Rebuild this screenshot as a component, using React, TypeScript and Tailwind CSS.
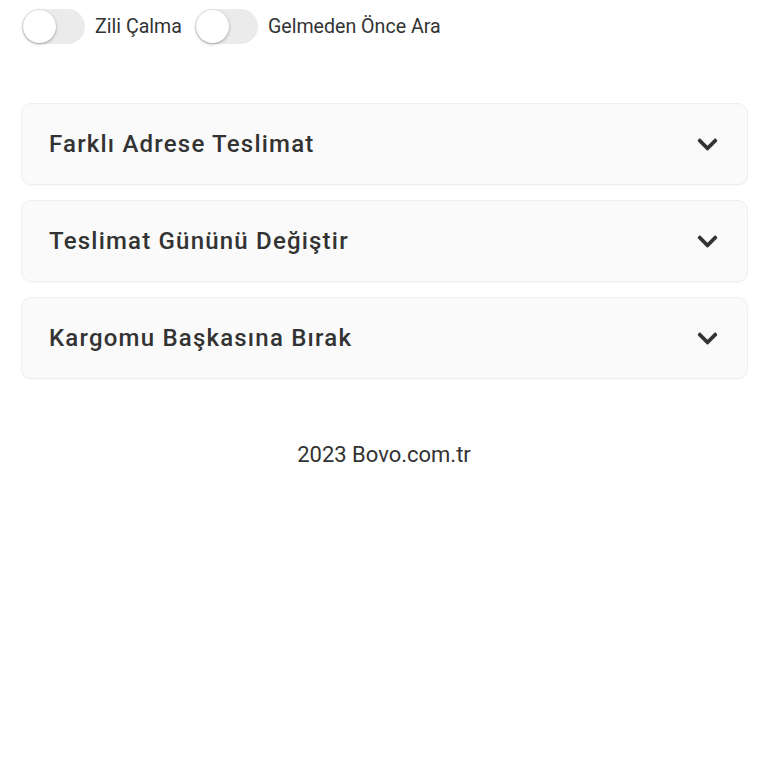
import React, { useState } from "react";
import { FaChevronDown } from "react-icons/fa";

function Toggle({ label }: { label: string }) {
  const [on, setOn] = useState(false);
  return (
    <label className="flex items-center gap-[10px] cursor-pointer">
      <button
        onClick={() => setOn(!on)}
        className={`relative w-[63px] h-[35px] rounded-full ${on ? "bg-[#4caf50]" : "bg-[#ebebeb]"}`}
      >
        <span
          className={`absolute top-[1px] ${on ? "left-[30px]" : "left-[1px]"} w-[33px] h-[33px] rounded-full bg-white shadow-[0_1px_3px_rgba(0,0,0,0.35)]`}
        />
      </button>
      <span className="text-[19.6px] text-[#333]">{label}</span>
    </label>
  );
}

function Accordion({ title }: { title: string }) {
  const [open, setOpen] = useState(false);
  return (
    <div className="rounded-[10px] bg-[#fafafa] border border-[#efefef] shadow-[0_1px_1px_rgba(0,0,0,0.03)]">
      <button
        onClick={() => setOpen(!open)}
        className="w-full h-[80px] flex items-center justify-between pl-[27px] pr-[28px]"
      >
        <span className="text-[24px] font-medium tracking-[1.2px] text-[#333]">{title}</span>
        <FaChevronDown className="w-[23px] h-[23px] text-[#333]" />
      </button>
    </div>
  );
}

export default function App() {
  return (
    <div className="min-h-[768px] bg-white" style={{ fontFamily: "Roboto, 'Noto Sans', sans-serif" }}>
      <div className="flex items-center gap-[13px] pl-[22px] pt-[9px]">
        <Toggle label="Zili Çalma" />
        <Toggle label="Gelmeden Önce Ara" />
      </div>
      <div className="flex flex-col gap-[15px] pl-[21px] pr-[20px] mt-[59px]">
        <Accordion title="Farklı Adrese Teslimat" />
        <Accordion title="Teslimat Gününü Değiştir" />
        <Accordion title="Kargomu Başkasına Bırak" />
      </div>
      <div className="text-center text-[22px] text-[#333] mt-[59px]">2023 Bovo.com.tr</div>
    </div>
  );
}
